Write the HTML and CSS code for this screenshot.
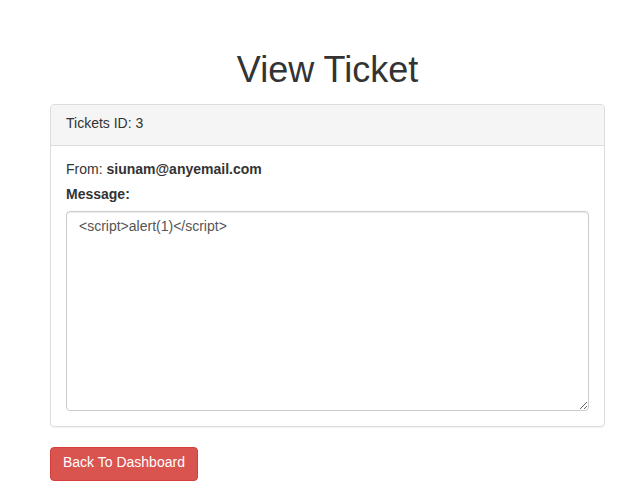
FILE: index.html
```html
<!DOCTYPE html>
<html>
<head>
<meta charset="utf-8">
<link rel="stylesheet" href="styles.css">
</head>
<body>
<div class="container">
  <h1 class="title">View Ticket</h1>
  <div class="panel">
    <div class="panel-heading">Tickets ID: 3</div>
    <div class="panel-body">
      <div class="from">From: <b>siunam@anyemail.com</b></div>
      <label class="msg-label">Message:</label>
      <textarea class="message" readonly>&lt;script&gt;alert(1)&lt;/script&gt;</textarea>
    </div>
  </div>
  <a class="btn-danger" href="#">Back To Dashboard</a>
</div>
</body>
</html>
```
FILE: styles.css
```css
* { box-sizing: border-box; }
html, body { margin: 0; padding: 0; background: #fff; }
body {
  font-family: "Liberation Sans", Arial, sans-serif;
  font-size: 14px;
  line-height: 20px;
  color: #333;
}
.container {
  width: 555px;
  margin-left: 50px;
}
.title {
  font-size: 36px;
  font-weight: 500;
  line-height: 39.6px;
  margin: 50px 0 14px;
  text-align: center;
}
.panel {
  border: 1px solid #ddd;
  border-radius: 4px;
  margin-bottom: 20px;
  box-shadow: 0 1px 1px rgba(0,0,0,0.05);
}
.panel-heading {
  background: #f5f5f5;
  border-bottom: 1px solid #ddd;
  padding: 8px 15px 12px;
  border-radius: 3px 3px 0 0;
}
.panel-body {
  padding: 13px 15px 15px;
}
.from { margin-bottom: 5px; }
.msg-label {
  display: block;
  font-weight: bold;
  margin-bottom: 7px;
}
.message {
  display: block;
  width: 100%;
  height: 200px;
  padding: 4px 12px 8px;
  font-family: "Liberation Sans", Arial, sans-serif;
  font-size: 14px;
  line-height: 20px;
  color: #555;
  border: 1px solid #ccc;
  border-radius: 4px;
  box-shadow: inset 0 1px 1px rgba(0,0,0,0.075);
  resize: vertical;
  margin: 0;
}
.btn-danger {
  display: inline-block;
  padding: 4px 12px 8px;
  font-size: 14px;
  line-height: 20px;
  color: #fff;
  background: #d9534f;
  border: 1px solid #d43f3a;
  border-radius: 4px;
  text-decoration: none;
}
```
